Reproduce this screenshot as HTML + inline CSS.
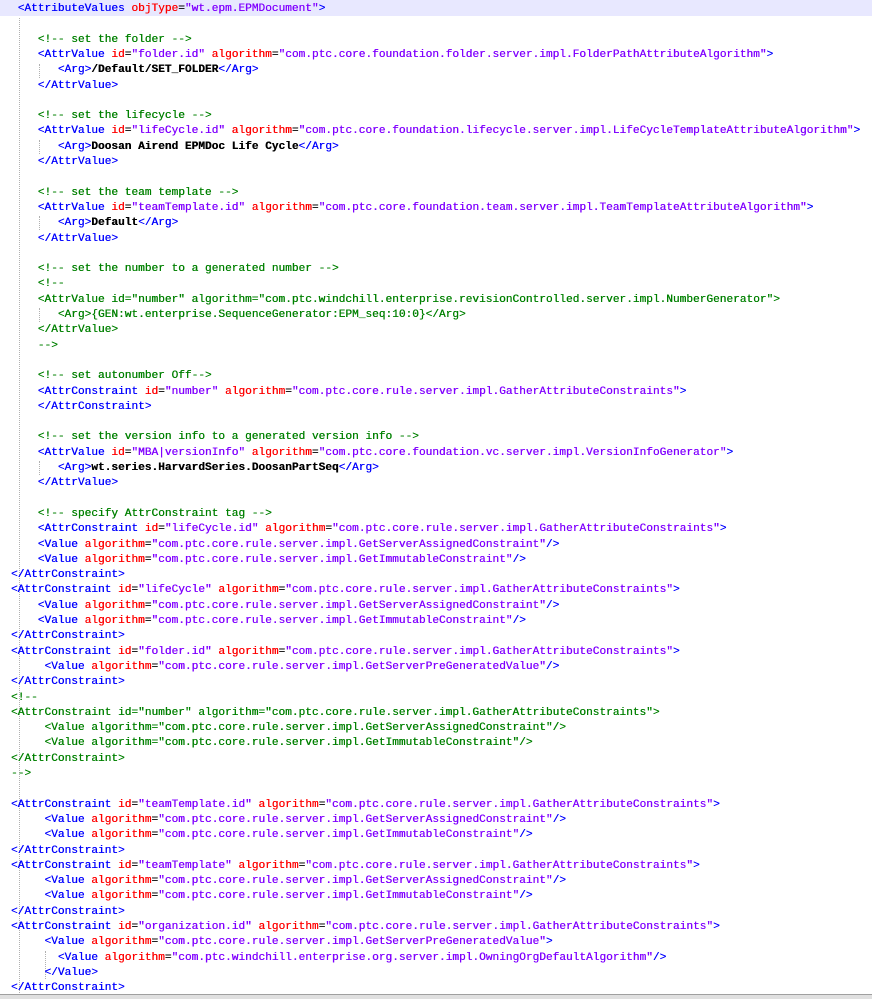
<!DOCTYPE html>
<html><head><meta charset="utf-8"><style>
html,body{margin:0;padding:0;background:#fff;width:872px;height:999px;overflow:hidden;position:relative}
.w{position:absolute;left:0;top:2px;width:872px;height:997px}
.l{position:absolute;left:11px;height:15.3px;line-height:15.3px;white-space:pre;font-family:"Liberation Mono","Courier New",monospace;font-size:11.15px;color:#000;text-shadow:0.3px 0 0 currentColor}
.t{color:#0000ff}.a{color:#ff0000}.v{color:#8000ff}.c{color:#008000}.b{font-weight:bold}
.hl{position:absolute;left:0;top:0;width:872px;height:16px;background:#e8e8ff}
.g{position:absolute;width:0;border-left:1px dotted #b0b0b0}
.bot{position:absolute;left:0;top:994px;width:872px;height:5px;background:#e0e0e0;border-top:1px solid #a0a0a0}
</style></head><body>
<div class="hl"></div>
<div class="w">
<div class="g" style="left:19px;top:16px;height:975px"></div>
<div class="g" style="left:39px;top:62px;height:14px"></div>
<div class="g" style="left:39px;top:138px;height:14px"></div>
<div class="g" style="left:39px;top:214px;height:14px"></div>
<div class="g" style="left:39px;top:306px;height:14px"></div>
<div class="g" style="left:39px;top:459px;height:14px"></div>
<div class="g" style="left:45px;top:949px;height:28px"></div>
<div class="l" style="top:0px"> <span class="t">&lt;AttributeValues</span> <span class="a">objType</span>=<span class="v">"wt.epm.EPMDocument"</span><span class="t">&gt;</span></div>
<div class="l" style="top:30.6px">    <span class="c">&lt;!-- set the folder --&gt;</span></div>
<div class="l" style="top:45.9px">    <span class="t">&lt;AttrValue</span> <span class="a">id</span>=<span class="v">"folder.id"</span> <span class="a">algorithm</span>=<span class="v">"com.ptc.core.foundation.folder.server.impl.FolderPathAttributeAlgorithm"</span><span class="t">&gt;</span></div>
<div class="l" style="top:61.2px">       <span class="t">&lt;Arg&gt;</span><span class="b">/Default/SET_FOLDER</span><span class="t">&lt;/Arg&gt;</span></div>
<div class="l" style="top:76.5px">    <span class="t">&lt;/AttrValue&gt;</span></div>
<div class="l" style="top:107.1px">    <span class="c">&lt;!-- set the lifecycle --&gt;</span></div>
<div class="l" style="top:122.4px">    <span class="t">&lt;AttrValue</span> <span class="a">id</span>=<span class="v">"lifeCycle.id"</span> <span class="a">algorithm</span>=<span class="v">"com.ptc.core.foundation.lifecycle.server.impl.LifeCycleTemplateAttributeAlgorithm"</span><span class="t">&gt;</span></div>
<div class="l" style="top:137.7px">       <span class="t">&lt;Arg&gt;</span><span class="b">Doosan Airend EPMDoc Life Cycle</span><span class="t">&lt;/Arg&gt;</span></div>
<div class="l" style="top:153px">    <span class="t">&lt;/AttrValue&gt;</span></div>
<div class="l" style="top:183.6px">    <span class="c">&lt;!-- set the team template --&gt;</span></div>
<div class="l" style="top:198.9px">    <span class="t">&lt;AttrValue</span> <span class="a">id</span>=<span class="v">"teamTemplate.id"</span> <span class="a">algorithm</span>=<span class="v">"com.ptc.core.foundation.team.server.impl.TeamTemplateAttributeAlgorithm"</span><span class="t">&gt;</span></div>
<div class="l" style="top:214.2px">       <span class="t">&lt;Arg&gt;</span><span class="b">Default</span><span class="t">&lt;/Arg&gt;</span></div>
<div class="l" style="top:229.5px">    <span class="t">&lt;/AttrValue&gt;</span></div>
<div class="l" style="top:260.1px">    <span class="c">&lt;!-- set the number to a generated number --&gt;</span></div>
<div class="l" style="top:275.4px">    <span class="c">&lt;!--</span></div>
<div class="l" style="top:290.7px">    <span class="c">&lt;AttrValue id="number" algorithm="com.ptc.windchill.enterprise.revisionControlled.server.impl.NumberGenerator"&gt;</span></div>
<div class="l" style="top:306px">       <span class="c">&lt;Arg&gt;{GEN:wt.enterprise.SequenceGenerator:EPM_seq:10:0}&lt;/Arg&gt;</span></div>
<div class="l" style="top:321.3px">    <span class="c">&lt;/AttrValue&gt;</span></div>
<div class="l" style="top:336.6px">    <span class="c">--&gt;</span></div>
<div class="l" style="top:367.2px">    <span class="c">&lt;!-- set autonumber Off--&gt;</span></div>
<div class="l" style="top:382.5px">    <span class="t">&lt;AttrConstraint</span> <span class="a">id</span>=<span class="v">"number"</span> <span class="a">algorithm</span>=<span class="v">"com.ptc.core.rule.server.impl.GatherAttributeConstraints"</span><span class="t">&gt;</span></div>
<div class="l" style="top:397.8px">    <span class="t">&lt;/AttrConstraint&gt;</span></div>
<div class="l" style="top:428.4px">    <span class="c">&lt;!-- set the version info to a generated version info --&gt;</span></div>
<div class="l" style="top:443.7px">    <span class="t">&lt;AttrValue</span> <span class="a">id</span>=<span class="v">"MBA|versionInfo"</span> <span class="a">algorithm</span>=<span class="v">"com.ptc.core.foundation.vc.server.impl.VersionInfoGenerator"</span><span class="t">&gt;</span></div>
<div class="l" style="top:459px">       <span class="t">&lt;Arg&gt;</span><span class="b">wt.series.HarvardSeries.DoosanPartSeq</span><span class="t">&lt;/Arg&gt;</span></div>
<div class="l" style="top:474.3px">    <span class="t">&lt;/AttrValue&gt;</span></div>
<div class="l" style="top:504.9px">    <span class="c">&lt;!-- specify AttrConstraint tag --&gt;</span></div>
<div class="l" style="top:520.2px">    <span class="t">&lt;AttrConstraint</span> <span class="a">id</span>=<span class="v">"lifeCycle.id"</span> <span class="a">algorithm</span>=<span class="v">"com.ptc.core.rule.server.impl.GatherAttributeConstraints"</span><span class="t">&gt;</span></div>
<div class="l" style="top:535.5px">    <span class="t">&lt;Value</span> <span class="a">algorithm</span>=<span class="v">"com.ptc.core.rule.server.impl.GetServerAssignedConstraint"</span><span class="t">/&gt;</span></div>
<div class="l" style="top:550.8px">    <span class="t">&lt;Value</span> <span class="a">algorithm</span>=<span class="v">"com.ptc.core.rule.server.impl.GetImmutableConstraint"</span><span class="t">/&gt;</span></div>
<div class="l" style="top:566.1px"><span class="t">&lt;/AttrConstraint&gt;</span></div>
<div class="l" style="top:581.4px"><span class="t">&lt;AttrConstraint</span> <span class="a">id</span>=<span class="v">"lifeCycle"</span> <span class="a">algorithm</span>=<span class="v">"com.ptc.core.rule.server.impl.GatherAttributeConstraints"</span><span class="t">&gt;</span></div>
<div class="l" style="top:596.7px">    <span class="t">&lt;Value</span> <span class="a">algorithm</span>=<span class="v">"com.ptc.core.rule.server.impl.GetServerAssignedConstraint"</span><span class="t">/&gt;</span></div>
<div class="l" style="top:612px">    <span class="t">&lt;Value</span> <span class="a">algorithm</span>=<span class="v">"com.ptc.core.rule.server.impl.GetImmutableConstraint"</span><span class="t">/&gt;</span></div>
<div class="l" style="top:627.3px"><span class="t">&lt;/AttrConstraint&gt;</span></div>
<div class="l" style="top:642.6px"><span class="t">&lt;AttrConstraint</span> <span class="a">id</span>=<span class="v">"folder.id"</span> <span class="a">algorithm</span>=<span class="v">"com.ptc.core.rule.server.impl.GatherAttributeConstraints"</span><span class="t">&gt;</span></div>
<div class="l" style="top:657.9px">     <span class="t">&lt;Value</span> <span class="a">algorithm</span>=<span class="v">"com.ptc.core.rule.server.impl.GetServerPreGeneratedValue"</span><span class="t">/&gt;</span></div>
<div class="l" style="top:673.2px"><span class="t">&lt;/AttrConstraint&gt;</span></div>
<div class="l" style="top:688.5px"><span class="c">&lt;!--</span></div>
<div class="l" style="top:703.8px"><span class="c">&lt;AttrConstraint id="number" algorithm="com.ptc.core.rule.server.impl.GatherAttributeConstraints"&gt;</span></div>
<div class="l" style="top:719.1px">     <span class="c">&lt;Value algorithm="com.ptc.core.rule.server.impl.GetServerAssignedConstraint"/&gt;</span></div>
<div class="l" style="top:734.4px">     <span class="c">&lt;Value algorithm="com.ptc.core.rule.server.impl.GetImmutableConstraint"/&gt;</span></div>
<div class="l" style="top:749.7px"><span class="c">&lt;/AttrConstraint&gt;</span></div>
<div class="l" style="top:765px"><span class="c">--&gt;</span></div>
<div class="l" style="top:795.6px"><span class="t">&lt;AttrConstraint</span> <span class="a">id</span>=<span class="v">"teamTemplate.id"</span> <span class="a">algorithm</span>=<span class="v">"com.ptc.core.rule.server.impl.GatherAttributeConstraints"</span><span class="t">&gt;</span></div>
<div class="l" style="top:810.9px">     <span class="t">&lt;Value</span> <span class="a">algorithm</span>=<span class="v">"com.ptc.core.rule.server.impl.GetServerAssignedConstraint"</span><span class="t">/&gt;</span></div>
<div class="l" style="top:826.2px">     <span class="t">&lt;Value</span> <span class="a">algorithm</span>=<span class="v">"com.ptc.core.rule.server.impl.GetImmutableConstraint"</span><span class="t">/&gt;</span></div>
<div class="l" style="top:841.5px"><span class="t">&lt;/AttrConstraint&gt;</span></div>
<div class="l" style="top:856.8px"><span class="t">&lt;AttrConstraint</span> <span class="a">id</span>=<span class="v">"teamTemplate"</span> <span class="a">algorithm</span>=<span class="v">"com.ptc.core.rule.server.impl.GatherAttributeConstraints"</span><span class="t">&gt;</span></div>
<div class="l" style="top:872.1px">     <span class="t">&lt;Value</span> <span class="a">algorithm</span>=<span class="v">"com.ptc.core.rule.server.impl.GetServerAssignedConstraint"</span><span class="t">/&gt;</span></div>
<div class="l" style="top:887.4px">     <span class="t">&lt;Value</span> <span class="a">algorithm</span>=<span class="v">"com.ptc.core.rule.server.impl.GetImmutableConstraint"</span><span class="t">/&gt;</span></div>
<div class="l" style="top:902.7px"><span class="t">&lt;/AttrConstraint&gt;</span></div>
<div class="l" style="top:918px"><span class="t">&lt;AttrConstraint</span> <span class="a">id</span>=<span class="v">"organization.id"</span> <span class="a">algorithm</span>=<span class="v">"com.ptc.core.rule.server.impl.GatherAttributeConstraints"</span><span class="t">&gt;</span></div>
<div class="l" style="top:933.3px">     <span class="t">&lt;Value</span> <span class="a">algorithm</span>=<span class="v">"com.ptc.core.rule.server.impl.GetServerPreGeneratedValue"</span><span class="t">&gt;</span></div>
<div class="l" style="top:948.6px">       <span class="t">&lt;Value</span> <span class="a">algorithm</span>=<span class="v">"com.ptc.windchill.enterprise.org.server.impl.OwningOrgDefaultAlgorithm"</span><span class="t">/&gt;</span></div>
<div class="l" style="top:963.9px">     <span class="t">&lt;/Value&gt;</span></div>
<div class="l" style="top:979.2px"><span class="t">&lt;/AttrConstraint&gt;</span></div>
</div>
<div class="bot"></div>
</body></html>
